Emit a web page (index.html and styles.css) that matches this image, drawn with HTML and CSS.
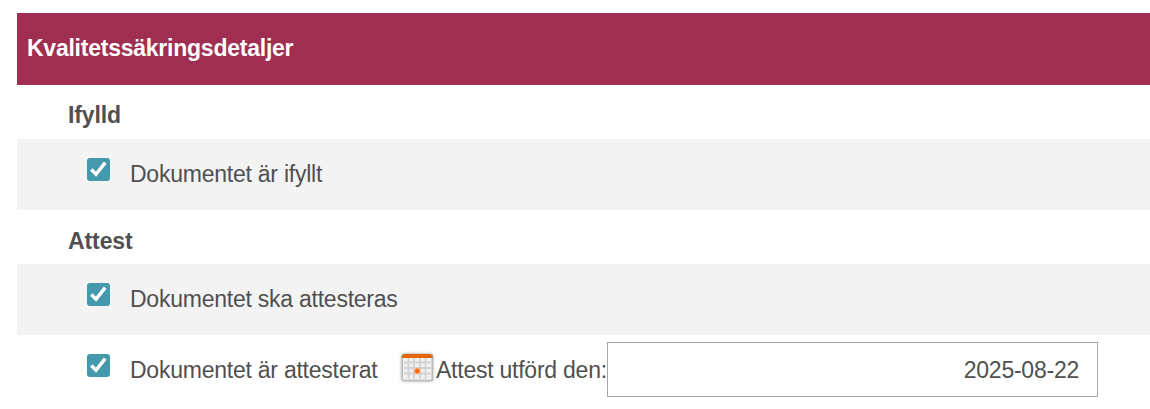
FILE: index.html
```html
<!DOCTYPE html>
<html lang="sv">
<head>
<meta charset="utf-8">
<title>Kvalitetssäkringsdetaljer</title>
<link rel="stylesheet" href="styles.css">
</head>
<body>
<main class="panel">
  <h1 class="panel-title">Kvalitetssäkringsdetaljer</h1>
  <h2 class="section-title">Ifylld</h2>
  <div class="row shaded">
    <svg class="check" viewBox="0 0 23 23"><rect width="23" height="23" rx="3"/><path d="M4.3 11.5 9 16.3 18.2 4.6"/></svg>
    <label class="text">Dokumentet är ifyllt</label>
  </div>
  <h2 class="section-title">Attest</h2>
  <div class="row shaded">
    <svg class="check" viewBox="0 0 23 23"><rect width="23" height="23" rx="3"/><path d="M4.3 11.5 9 16.3 18.2 4.6"/></svg>
    <label class="text">Dokumentet ska attesteras</label>
  </div>
  <div class="row">
    <svg class="check" viewBox="0 0 23 23"><rect width="23" height="23" rx="3"/><path d="M4.3 11.5 9 16.3 18.2 4.6"/></svg>
    <label class="text attested">Dokumentet är attesterat</label>
    <svg class="calendar" viewBox="0 0 34 32">
      <defs><radialGradient id="dot"><stop offset=".45" stop-color="#ff6a0a"/><stop offset="1" stop-color="#ffb27d" stop-opacity=".2"/></radialGradient></defs>
      <rect class="cal-body" x="1.3" y="2.5" width="30" height="26" rx="1.5"/>
      <path class="cal-grid" d="M7.5 6v21M13 6v21M19 6v21M24.5 6v21M3 10.5h27M3 16h27M3 21.5h27"/>
      <path class="cal-top" d="M.8 6V4.1L3 1.9h26.5l2.2 2.2V6z"/>
      <circle cx="16.2" cy="19" r="3.8" fill="url(#dot)"/>
    </svg>
    <span class="text date-label">Attest utförd den:</span>
    <div class="date-field">2025-08-22</div>
  </div>
</main>
</body>
</html>
```
FILE: styles.css
```css
* { box-sizing: border-box; }
body { margin: 0; background: #fff; color: #505050; font: 23px/26px "Liberation Sans", Arial, sans-serif; letter-spacing: -0.24px; overflow: hidden; }
.panel { margin: 13px 0 0 17px; }
.panel-title { margin: 0; height: 72px; padding: 22px 10px; background: #9f2e50; color: #fff; font-size: 23px; line-height: 26px; }
.section-title { margin: 0; height: 54px; padding: 17px 51px 0; font-size: 23px; line-height: 26px; letter-spacing: -0.1px; }
.row { display: flex; height: 71px; padding-left: 70px; }
.shaded { background: #f3f3f3; }
.shaded + .section-title { padding-top: 18px; }
.check { width: 23px; height: 23px; margin: 19px 20px 0 0; flex: none; fill: #449aac; }
.check path { fill: none; stroke: #fff; stroke-width: 3.4; }
.text { padding-top: 22px; white-space: nowrap; }
.attested { width: 271px; }
.calendar { width: 34px; height: 32px; margin: 17px 1px 0 0; flex: none; overflow: visible; filter: drop-shadow(0 0 1.5px #aaa); }
.cal-body { fill: #f0f0f0; stroke: #bbb; stroke-width: 1.5; }
.cal-grid { fill: none; stroke: #d2d2d2; stroke-width: 1.8; }
.cal-top { fill: #e4660c; }
.date-label { width: 171px; }
.date-field { width: 491px; height: 55px; margin-top: 7px; padding: 14px 18px; border: 1px solid #a6a6a6; text-align: right; }
```
